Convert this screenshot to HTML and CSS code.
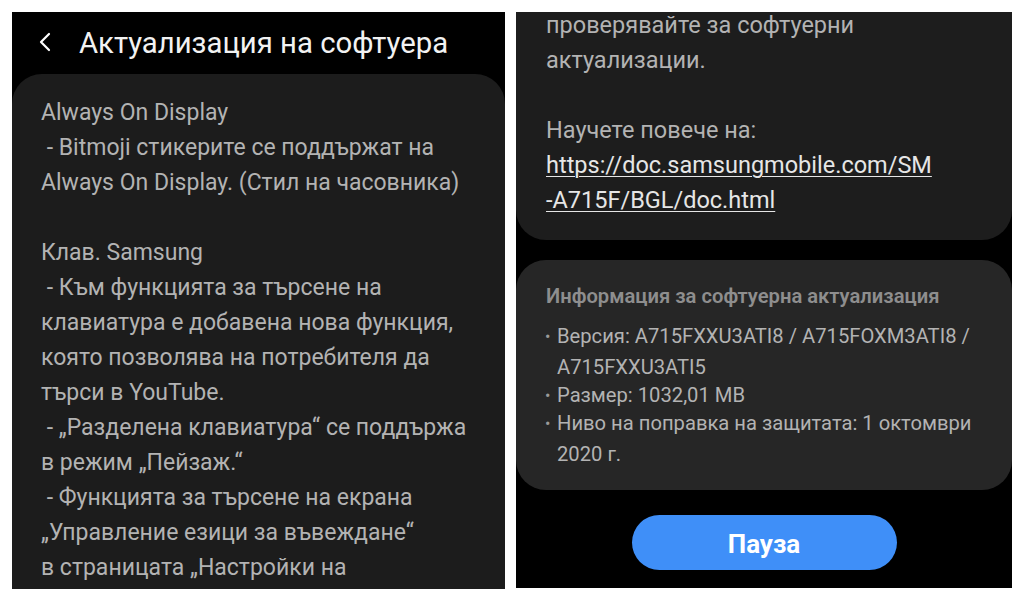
FILE: index.html
```html
<!DOCTYPE html>
<html lang="bg">
<head>
<meta charset="utf-8">
<title>Актуализация на софтуера</title>
<link rel="stylesheet" href="styles.css">
</head>
<body>
<div class="screens">
  <section class="panel panel-left">
    <header class="appbar">
      <svg class="back" width="14" height="20" viewBox="0 0 14 20"><polyline points="11,2 3,10 11,18" fill="none" stroke="#ffffff" stroke-width="2.2" stroke-linecap="round" stroke-linejoin="round"/></svg>
      <h1 class="title">Актуализация на софтуера</h1>
    </header>
    <div class="card card-notes">
      <p class="para">Always On Display<br>&nbsp;- Bitmoji стикерите се поддържат на<br>Always On Display. (Стил на часовника)</p>
      <p class="para">Клав. Samsung<br>&nbsp;- Към функцията за търсене на<br>клавиатура е добавена нова функция,<br>която позволява на потребителя да<br>търси в YouTube.<br>&nbsp;- „Разделена клавиатура“ се поддържа<br>в режим „Пейзаж.“<br>&nbsp;- Функцията за търсене на екрана<br>„Управление езици за въвеждане“<br>в страницата „Настройки на</p>
    </div>
  </section>
  <section class="panel panel-right">
    <div class="card card-tail">
      <p class="para para-lg">проверявайте за софтуерни<br>актуализации.</p>
      <p class="para para-lg">Научете повече на:<br><a class="link" href="#">https://doc.samsungmobile.com/SM<br>-A715F/BGL/doc.html</a></p>
    </div>
    <div class="card card-info">
      <h2 class="info-title">Информация за софтуерна актуализация</h2>
      <ul class="info-list">
        <li>Версия: A715FXXU3ATI8 / A715FOXM3ATI8 /<br>A715FXXU3ATI5</li>
        <li>Размер: 1032,01 MB</li>
        <li>Ниво на поправка на защитата: 1 октомври<br>2020 г.</li>
      </ul>
    </div>
    <button class="btn-pause" type="button">Пауза</button>
  </section>
</div>
</body>
</html>
```

FILE: styles.css
```css
* { box-sizing: border-box; }
html, body { margin: 0; padding: 0; background: #ffffff; }
body { font-family: Roboto, "Noto Sans", "Liberation Sans", sans-serif; }

.screens {
  display: flex;
  gap: 11px;
  padding: 12px;
  width: 1024px;
  height: 601px;
}

.panel {
  background: #000000;
  overflow: hidden;
  display: flex;
  flex-direction: column;
}
.panel-left { width: 493px; height: 577px; }
.panel-right { width: 496px; height: 576px; }

.appbar {
  height: 62px;
  flex: none;
  display: flex;
  align-items: center;
  padding-left: 26px;
}
.back { flex: none; margin-right: 27px; margin-top: -2px; }
.title {
  margin: 0;
  font-size: 29.3px;
  font-weight: 400;
  color: #f2f2f2;
  white-space: nowrap;
  margin-top: -1px;
}

.card { background: #1c1c1c; flex: none; }

.card-notes {
  border-radius: 30px 30px 0 0;
  padding: 21px 20px 0 29px;
  flex: 1;
}

.para {
  margin: 0 0 35px;
  font-size: 23px;
  line-height: 35px;
  color: #b3b3b3;
  white-space: nowrap;
}
.para:last-child { margin-bottom: 0; }
.para-lg { font-size: 23.5px; }

.card-tail {
  margin-top: -4px;
  border-radius: 0 0 30px 30px;
  padding: 0 20px 22px 30px;
  background: #1d1d1d;
}
.link { color: #e6e6e6; text-decoration: underline; text-underline-offset: 3px; text-decoration-thickness: 1px; }

.card-info {
  margin-top: 20px;
  border-radius: 30px;
  background: #262626;
  padding: 23px 20px 20px 30px;
}
.info-title {
  margin: 0;
  font-size: 20.2px;
  line-height: 26px;
  font-weight: 600;
  color: #8e8e8e;
  white-space: nowrap;
}
.info-list {
  margin: 12px 0 0;
  padding: 0;
  list-style: none;
}
.info-list li {
  position: relative;
  padding-left: 11px;
  font-size: 20.2px;
  line-height: 31px;
  color: #b3b3b3;
  white-space: nowrap;
  margin-top: -3px;
}
.info-list li:first-child { margin-top: 0; }
.info-list li::before {
  content: "•";
  position: absolute;
  left: -1px;
  top: 0;
  font-size: 16px;
  color: #9a9a9a;
}

.btn-pause {
  align-self: center;
  margin-top: 25px;
  width: 265px;
  height: 55px;
  border: none;
  border-radius: 28px;
  background: #3f8ff8;
  color: #ffffff;
  font-family: Roboto, "Noto Sans", sans-serif;
  font-size: 26px;
  font-weight: 700;
  padding: 3px 0 0;
}
```
